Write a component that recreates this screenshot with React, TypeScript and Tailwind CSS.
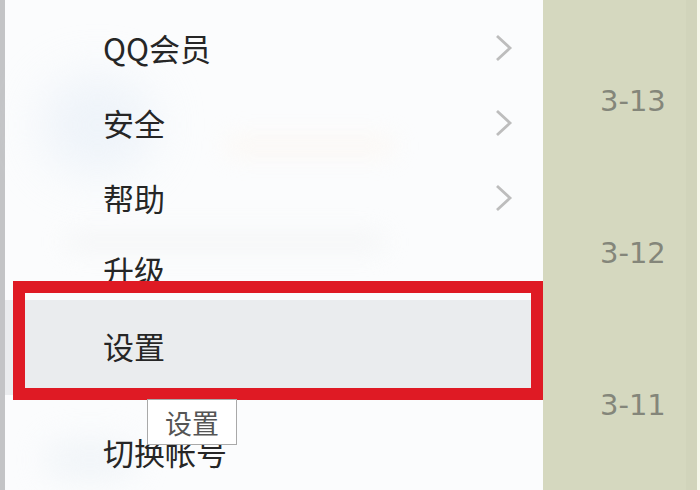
import { ReactNode } from 'react'

const cjk = { fontFamily: '"Noto Sans CJK SC", "Noto Sans", sans-serif' }

function Chevron() {
  return (
    <svg width="20" height="28" viewBox="0 0 20 28" fill="none" className="shrink-0">
      <polyline points="4,2 17,14 4,26" stroke="#bdbdbd" strokeWidth="2.8" strokeLinejoin="miter" />
    </svg>
  )
}

function MenuRow({ label, arrow = false, className = '' }: { label: ReactNode; arrow?: boolean; className?: string }) {
  return (
    <div className={`flex items-center justify-between pl-[98px] pr-[30px] ${className}`}>
      <span className="text-[31px] leading-none text-[#262626]" style={cjk}>
        {label}
      </span>
      {arrow ? <Chevron /> : null}
    </div>
  )
}

const dates = ['3-13', '3-12', '3-11']

export default function App() {
  return (
    <div className="relative flex h-[490px] w-[700px] overflow-hidden bg-white">
      <div className="w-[5px] shrink-0 bg-[#c3c4c6]" />

      <div className="relative flex w-[538px] shrink-0 flex-col bg-[#fbfcfd] pt-[10px]">
        {/* blurred content showing through the menu */}
        <div className="pointer-events-none absolute left-[35px] top-[75px] h-[100px] w-[115px] rounded-full bg-[#e6eef7] opacity-60 blur-xl" />
        <div className="pointer-events-none absolute left-[220px] top-[138px] h-[16px] w-[170px] rounded-full bg-[#fcf3ea] opacity-60 blur-md" />
        <div className="pointer-events-none absolute left-[60px] top-[234px] h-[16px] w-[320px] rounded-full bg-[#f0f1f2] opacity-70 blur-md" />
        <div className="pointer-events-none absolute left-[40px] top-[440px] h-[40px] w-[90px] rounded-full bg-[#eaf0f5] opacity-60 blur-lg" />

        <div className="relative flex flex-col">
          <MenuRow label="QQ会员" arrow className="h-[75px]" />
          <MenuRow label="安全" arrow className="h-[75px]" />
          <MenuRow label="帮助" arrow className="h-[75px]" />
          <MenuRow label="升级" className="h-[65px] pt-[4px]" />
          <MenuRow label="设置" className="h-[95px] bg-[#eaecee] pb-[4px]" />
          <div className="h-[20px]" />
          <MenuRow label="切换帐号" className="h-[76px] pb-[4px]" />
        </div>
      </div>

      <div className="flex w-[143px] shrink-0 flex-col bg-[#d5d8bf] pl-[57px] pt-[25px]">
        {dates.map((d) => (
          <div key={d} className="flex h-[152px] items-center">
            <span className="text-[29px] leading-none text-[#84867a]" style={{ fontFamily: '"DejaVu Sans", sans-serif' }}>
              {d}
            </span>
          </div>
        ))}
      </div>
      <div className="w-[11px] shrink-0 bg-[#d1d4bb]" />
      <div className="w-[3px] shrink-0 bg-[#f6f7ea]" />

      {/* red annotation box */}
      <div className="pointer-events-none absolute left-[13px] top-[281px] h-[119px] w-[530px] border-[12px] border-[#df1a24]" />

      {/* tooltip */}
      <div
        className="absolute left-[147px] top-[399px] flex h-[46px] w-[90px] items-center justify-center border border-[#a9a9a9] bg-white text-[27px] leading-none text-[#555]"
        style={cjk}
      >
        设置
      </div>
    </div>
  )
}
